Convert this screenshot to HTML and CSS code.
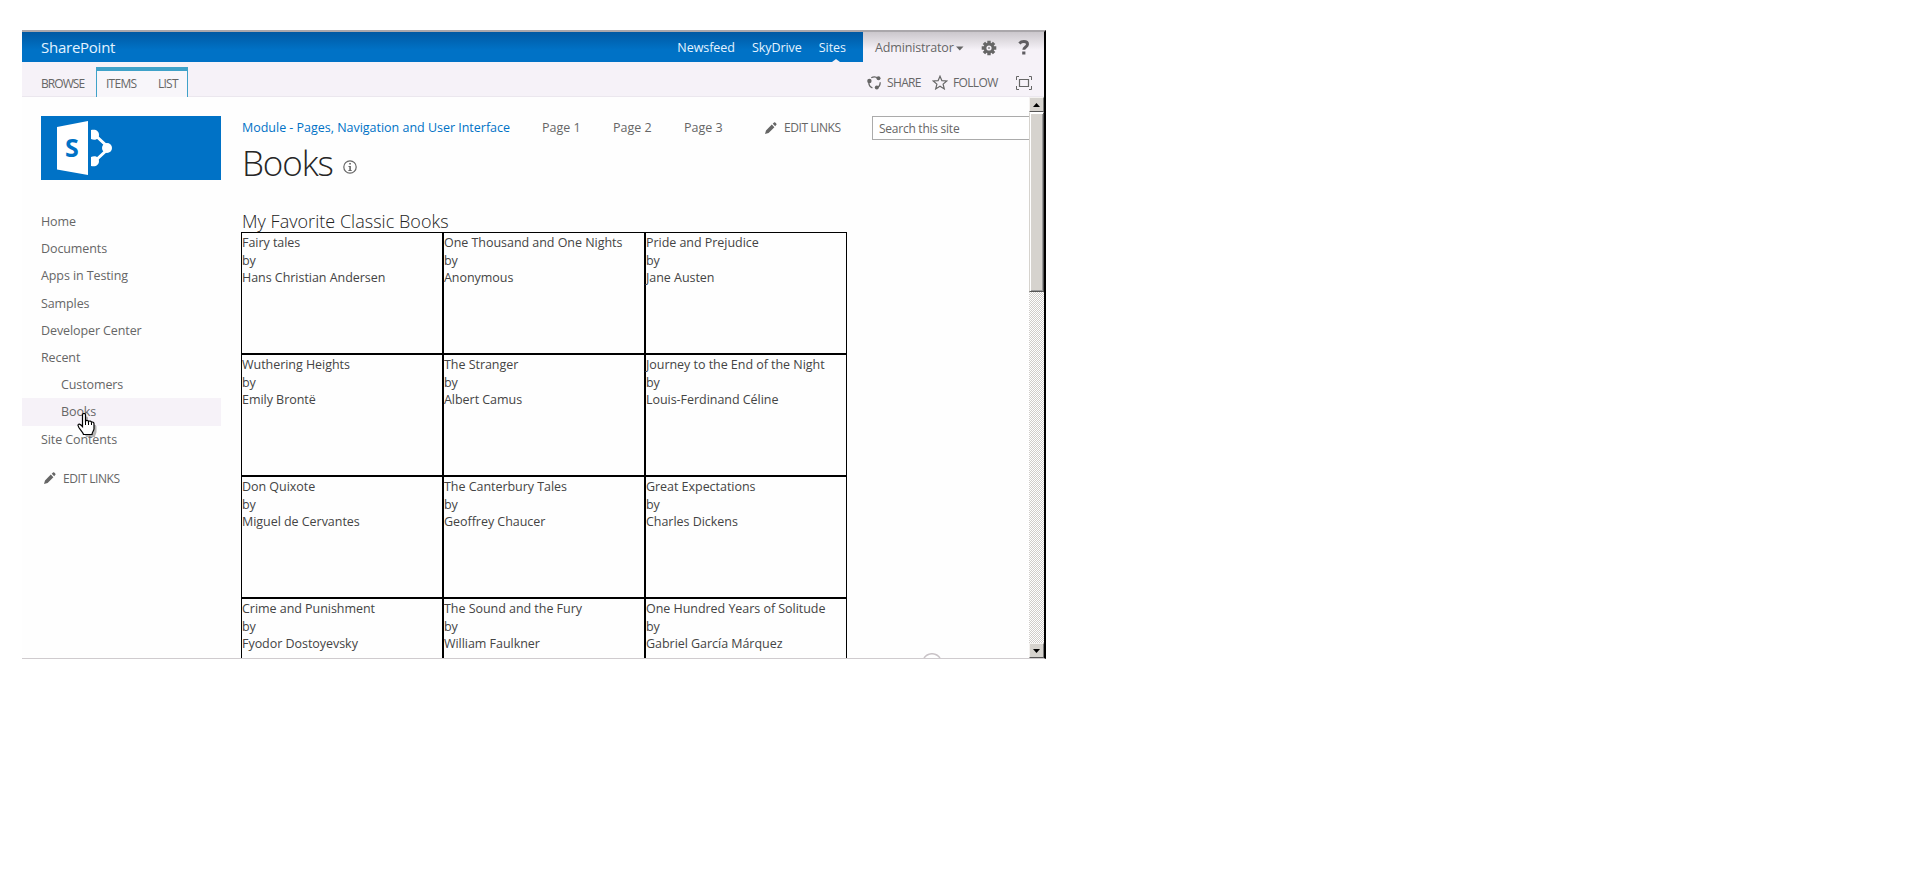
FILE: index.html
```html
<!DOCTYPE html>
<html lang="en">
<head>
<meta charset="utf-8">
<title>Books</title>
<link rel="stylesheet" href="styles.css">
</head>
<body>
<div class="window">
  <header class="suite">
    <div class="suite-blue">
      <span class="brand">SharePoint</span>
      <nav class="suite-links"><a>Newsfeed</a><a>SkyDrive</a><a class="l-sites">Sites</a></nav>
    </div>
    <div class="suite-user">
      <span class="admin">Administrator</span>
      <svg class="caret" width="8" height="5" viewBox="0 0 8 5"><path d="M0 .5h7.5L3.8 4.5z" fill="#666"/></svg>
      <svg class="gear" width="16" height="16" viewBox="0 0 16 16"><g stroke="#666" stroke-width="3.4"><path d="M8 .7v14.6M.7 8h14.6M2.9 2.9l10.2 10.2M13.1 2.9L2.9 13.1"/></g><circle cx="8" cy="8" r="5.4" fill="#666"/><circle cx="8" cy="8" r="2.6" fill="#f3eff5"/><circle cx="8" cy="8" r="1" fill="#888"/></svg>
      <svg class="help" width="12" height="15" viewBox="0 0 12 15"><path d="M1.400 3.400C2.700 2 4.100 1.600 5.800 1.600c2.400 0 3.700 1 3.700 2.700 0 2.600-3.700 2.700-3.700 5.400" fill="none" stroke="#5f5d61" stroke-width="3"/><rect x="4.200" y="11.500" width="3.200" height="3" fill="#5f5d61"/></svg>
    </div>
  </header>
  <div class="ribbon">
    <span class="tab browse">BROWSE</span>
    <div class="tab-group"><span class="tab items">ITEMS</span><span class="tab list">LIST</span></div>
    <div class="actions">
      <svg class="i-share" width="15" height="15" viewBox="0 0 15 15"><circle cx="7.500" cy="7.500" r="5.700" fill="none" stroke="#666" stroke-width="1.300" stroke-dasharray="8.500 3.400" stroke-dashoffset="1"/><circle cx="2.400" cy="6" r="2.200" fill="#666"/><circle cx="11.500" cy="3.200" r="2" fill="#666"/><circle cx="9.800" cy="12.400" r="2" fill="#666"/></svg>
      <span class="t-share">SHARE</span>
      <svg class="i-star" width="16" height="15" viewBox="0 0 16 15"><path d="M8 1.200l1.900 4.500 4.900.3-3.700 3.100 1.200 4.800L8 11.300l-4.300 2.600 1.200-4.800L1.200 6l4.900-.3z" fill="none" stroke="#666" stroke-width="1.200"/></svg>
      <span class="t-follow">FOLLOW</span>
      <svg class="i-full" width="16" height="14" viewBox="0 0 16 14" fill="none" stroke="#666"><path d="M3 .5H.5V4M13 .5h2.500V4M3 13.500H.5V10M13 13.500h2.500V10"/><path d="M3.500 3.500h9v7h-9z" stroke-width="1.200"/></svg>
    </div>
  </div>
  <div class="workspace">
    <aside class="side">
      <svg class="logo" width="180" height="64" viewBox="0 0 180 64"><path d="M0 0h180v64H0z" fill="#0072c6"/><path d="M16 11l31-6v54l-31-5.500z" fill="#fff"/><path d="M54 19l14 13-14 13" fill="none" stroke="#fff" stroke-width="3"/><path d="M50 14c5-1 8 1 8 5s-4 6-8 4zM50 41c4-2 8 0 8 4s-3 6-8 5z" fill="#fff"/><circle cx="66" cy="32" r="5" fill="#fff"/><text class="logo-s" x="24" y="41">S</text></svg>
      <nav class="nav">
        <a>Home</a>
        <a>Documents</a>
        <a>Apps in Testing</a>
        <a>Samples</a>
        <a>Developer Center</a>
        <a>Recent</a>
        <a class="sub">Customers</a>
        <a class="sub current">Books</a>
        <a>Site Contents</a>
      </nav>
      <div class="edit side-edit"><svg width="12" height="12" viewBox="0 0 12 12"><path d="M0 12l1-3.600 5.800-5.800 2.600 2.600-5.800 5.800zM7.700 1.800L9.300.3c.6-.5 2.800 1.600 2.200 2.300L10.200 4.200z" fill="#666"/></svg><span>EDIT LINKS</span></div>
    </aside>
    <main class="main">
      <div class="topnav">
        <a class="site">Module - Pages, Navigation and User Interface</a>
        <a class="page">Page 1</a><a class="page">Page 2</a><a class="page">Page 3</a>
        <div class="edit"><svg width="12" height="12" viewBox="0 0 12 12"><path d="M0 12l1-3.600 5.800-5.800 2.600 2.600-5.800 5.800zM7.700 1.800L9.300.3c.6-.5 2.800 1.600 2.200 2.300L10.200 4.200z" fill="#666"/></svg><span>EDIT LINKS</span></div>
        <div class="search"><span>Search this site</span></div>
      </div>
      <div class="heading"><h1>Books</h1><svg width="14" height="14" viewBox="0 0 14 14"><circle cx="7" cy="7" r="6.200" fill="none" stroke="#666" stroke-width="1.200"/><path d="M6.200 3h1.700v1.600H6.200zM5.500 6h2.400v4h.8v1H5.400v-1h.9V7h-.8z" fill="#666"/></svg></div>
      <h2>My Favorite Classic Books</h2>
      <div class="grid">
        <div class="book">Fairy tales<br>by<br>Hans Christian Andersen</div>
        <div class="book">One Thousand and One Nights<br>by<br>Anonymous</div>
        <div class="book">Pride and Prejudice<br>by<br>Jane Austen</div>
        <div class="book">Wuthering Heights<br>by<br>Emily Brontë</div>
        <div class="book">The Stranger<br>by<br>Albert Camus</div>
        <div class="book">Journey to the End of the Night<br>by<br>Louis-Ferdinand Céline</div>
        <div class="book">Don Quixote<br>by<br>Miguel de Cervantes</div>
        <div class="book">The Canterbury Tales<br>by<br>Geoffrey Chaucer</div>
        <div class="book">Great Expectations<br>by<br>Charles Dickens</div>
        <div class="book">Crime and Punishment<br>by<br>Fyodor Dostoyevsky</div>
        <div class="book">The Sound and the Fury<br>by<br>William Faulkner</div>
        <div class="book">One Hundred Years of Solitude<br>by<br>Gabriel García Márquez</div>
      </div>
    </main>
    <div class="scroll">
      <div class="sbtn"><svg width="7" height="4" viewBox="0 0 7 4"><path d="M3.500 0L7 4H0z"/></svg></div>
      <div class="thumb"></div>
      <div class="sbtn down"><svg width="7" height="4" viewBox="0 0 7 4"><path d="M0 0h7L3.500 4z"/></svg></div>
    </div>
  </div>
  <svg class="cursor" width="24" height="28" viewBox="0 0 24 28"><path d="M7 3c0-2 3-2 3 0v6c1-1 3-.5 3 .5 1-1 3-.3 3 .8 1-.7 2.500 0 2.500 1.500v5c0 2-1.500 3-1.500 5.200H8c0-2-5-6-5.500-9 0-2 2-2 4.500 1z" transform="translate(2 2)" fill="#777" opacity=".55"/><path d="M6.500 2c0-2 3-2 3 0v6c1-1 3-.5 3 .5 1-1 3-.3 3 .8 1-.7 2.500 0 2.500 1.500v5c0 2-2 3-2 5.700H7.500c0-2-5-6-5.500-9 0-2 2-2 4.500 1z" fill="#fff" stroke="#000" stroke-width="1.200"/><path d="M9.500 8v4M12.500 9v3M15.500 10v2" stroke="#000"/></svg>
  <svg class="ring" width="18" height="5" viewBox="0 0 18 5"><path d="M1 5C5-.7 13-.7 17 5" fill="#fff" stroke="#c9c3c7" stroke-width="1.500"/></svg>
</div>
</body>
</html>
```
FILE: styles.css
```css
* { box-sizing: border-box; }
body { margin: 0; background: #fff; font: 12.500px/17.550px "Open Sans", "Noto Sans", sans-serif; color: #444; padding: 30px 0 0 22px; white-space: nowrap; }
.window { position: relative; width: 1024px; height: 629px; overflow: hidden; background: #fefefe; border-top: 2px solid #aaa7ab; border-right: 2px solid #000; border-bottom: 1px solid #cfcbce; display: flex; flex-direction: column; }
.suite { display: flex; height: 30px; line-height: 31px; flex: none; }
.suite-blue { width: 841px; background: linear-gradient(#0059a3, #0072c6 60%); color: #fff; display: flex; justify-content: space-between; padding: 0 17px 0 19px; }
.brand { font-size: 15px; letter-spacing: -.25px; color: #e4f3ff; }
.suite-links { display: flex; gap: 17px; color: #e4f3ff; letter-spacing: -.05px; }
.l-sites { position: relative; }
.l-sites::after { content: ""; position: absolute; left: 13px; bottom: 0; border: 4px solid transparent; border-top: 0; border-bottom: 3px solid #f6f2f8; }
.suite-user { flex: 1; display: flex; align-items: center; background: linear-gradient(#cbc7cc, #f6f2f8 60%); color: #666; padding-left: 12px; }
.admin { width: 78px; letter-spacing: -.15px; }
.caret { margin: 2px 17px 0 3px; }
.gear { margin-top: 1px; }
.help { margin-left: 21px; }
.ribbon { height: 35px; flex: none; background: #f6f2f8; border-bottom: 1px solid #ebe7ee; display: flex; color: #666; font-size: 12px; }
.tab { padding-top: 13px; letter-spacing: -.95px; }
.browse { margin-left: 19px; width: 55px; }
.tab-group { margin-top: 5px; height: 30px; width: 92px; border: 1px solid #3fa2c9; border-top-width: 4px; border-bottom: 0; display: flex; background: #f8f6fa; }
.tab-group .tab { padding-top: 4px; letter-spacing: -.75px; }
.items { margin-left: 9px; width: 52px; }
.actions { margin-left: auto; display: flex; align-items: center; padding: 7px 12px 0 0; letter-spacing: -.65px; }
.i-share { margin-right: 5px; }
.t-share { width: 45px; }
.i-star { margin-right: 5px; }
.t-follow { width: 63px; }
.workspace { flex: 1; min-height: 0; display: flex; }
.side { width: 199px; flex: none; padding-top: 19px; color: #666; }
.logo { display: block; margin-left: 19px; }
.logo-s { font: bold 25px "Open Sans", sans-serif; fill: #0072c6; }
.nav { display: flex; flex-direction: column; margin-top: 28px; letter-spacing: -.1px; }
.nav a { height: 27.200px; line-height: 27.600px; padding-left: 19px; }
.nav a.sub { padding-left: 39px; }
.nav a.current { background: #f6f2f8; }
.edit { display: flex; align-items: center; font-size: 12px; letter-spacing: -.45px; color: #666; }
.edit svg { margin-right: 7px; }
.side-edit { margin: 17px 0 0 22px; }
.main { width: 808px; flex: none; padding: 19px 0 0 20px; overflow: hidden; }
.topnav { display: flex; height: 24px; align-items: center; color: #666; }
.site { width: 301px; padding-left: 1px; color: #0072c6; letter-spacing: -.02px; }
.page { width: 71px; }
.topnav .edit { width: 107px; margin-left: 10px; }
.search { flex: 1; height: 24px; border: 1px solid #ababab; border-right: 0; padding: 3px 0 0 6px; font-size: 12px; letter-spacing: -.25px; background: #fff; }
.heading { display: flex; height: 46px; padding-left: 1px; }
h1 { margin: 0; width: 101px; font: 300 35px/45px "Open Sans", sans-serif; letter-spacing: -1.100px; color: #262626; }
.heading svg { margin-top: 20px; }
h2 { margin: 16px 0 0 1px; padding-top: 4px; font: 300 18px/30px "Open Sans", sans-serif; letter-spacing: .03px; color: #222; height: 30px; }
.grid { display: grid; grid-template-columns: repeat(3, 202px); grid-auto-rows: 122px; }
.book { border: 1px solid #000; padding-top: 1px; letter-spacing: -.04px; }
.scroll { width: 15px; display: flex; flex-direction: column; background: repeating-conic-gradient(#d0cdca 0 25%, #fff 0 50%) 0 0 / 2px 2px; }
.sbtn { height: 15px; background: #d6d3ce; border: 1px solid #f4f2f0; border-right-color: #777; border-bottom: 1px solid #555; display: flex; align-items: center; justify-content: center; flex: none; }
.thumb { height: 180px; background: #d6d3ce; border: 1px solid #555; border-top-color: #fff; border-left: 1px solid #d6d3ce; box-shadow: inset 1px 1px #fff, inset -1px -1px #999; }
.down { margin-top: auto; }
.cursor { position: absolute; left: 54px; top: 381px; }
.ring { position: absolute; left: 901px; bottom: 0; }
```
